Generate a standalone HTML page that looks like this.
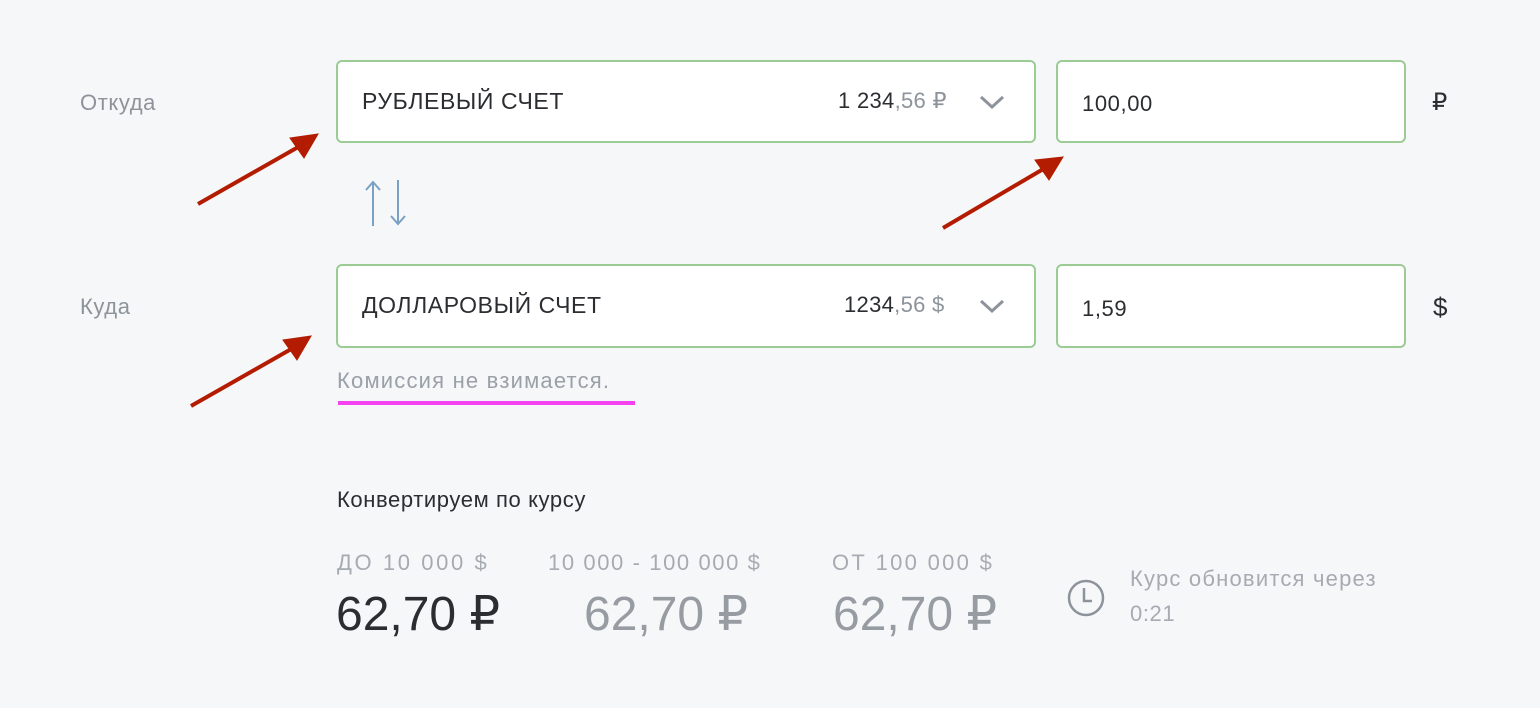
<!DOCTYPE html>
<html><head><meta charset="utf-8"><style>
body{margin:0;width:1540px;height:708px;background:#f6f7f9;font-family:"Liberation Sans",sans-serif;position:relative;overflow:hidden}
.a{position:absolute;white-space:nowrap}
.box{position:absolute;background:#fff;border:2px solid #9ccb95;border-radius:6px;box-sizing:border-box}
.lbl{color:#8d939b;font-size:22px;letter-spacing:0.6px}
.t{font-size:23px;color:#2b2d31;letter-spacing:0.6px}
.g{color:#8d939b}
</style></head><body>
<div class="a lbl" style="left:80px;top:90px">Откуда</div>
<div class="a lbl" style="left:80px;top:294px">Куда</div>

<div class="box" style="left:336px;top:60px;width:700px;height:83px"></div>
<div class="a t" style="left:362px;top:88px">РУБЛЕВЫЙ СЧЕТ</div>
<div class="a t" style="left:838px;top:88px;font-size:22px;letter-spacing:0.3px">1 234<span class="g">,56 ₽</span></div>
<svg class="a" style="left:979px;top:94px" width="26" height="16"><path d="M2 3 L13 13 L24 3" stroke="#8d939b" stroke-width="3" fill="none"/></svg>
<div class="box" style="left:1056px;top:60px;width:350px;height:83px"></div>
<div class="a t" style="left:1082px;top:91px;font-size:22px">100,00</div>
<div class="a t" style="left:1432px;top:88px;font-size:24px">₽</div>

<svg class="a" style="left:362px;top:178px" width="50" height="50"><g stroke="#7aa0c4" stroke-width="2" fill="none"><path d="M11 48 V4 M4 12 L11 4 L18 12"/><path d="M36 2 V46 M29 38 L36 46 L43 38"/></g></svg>

<div class="box" style="left:336px;top:264px;width:700px;height:84px"></div>
<div class="a t" style="left:362px;top:292px">ДОЛЛАРОВЫЙ СЧЕТ</div>
<div class="a t" style="left:844px;top:292px;font-size:22px;letter-spacing:0.3px">1234<span class="g">,56 $</span></div>
<svg class="a" style="left:979px;top:298px" width="26" height="16"><path d="M2 3 L13 13 L24 3" stroke="#8d939b" stroke-width="3" fill="none"/></svg>
<div class="box" style="left:1056px;top:264px;width:350px;height:84px"></div>
<div class="a t" style="left:1082px;top:296px;font-size:22px">1,59</div>
<div class="a t" style="left:1433px;top:292px;font-size:26px">$</div>

<div class="a lbl" style="left:337px;top:368px;font-size:22px;color:#9aa0a8;letter-spacing:1.2px">Комиссия не взимается.</div>
<div class="a" style="left:338px;top:401px;width:297px;height:4px;background:#f542f0"></div>

<svg class="a" style="left:0;top:0" width="1540" height="708"><g fill="#b31c00" stroke="#b31c00"><path d="M198 204 L300 146" stroke-width="4"/><path d="M318 134 L290 138 L304 158Z"/><path d="M191 406 L293 348" stroke-width="4"/><path d="M311 336 L283 340 L297 360Z"/><path d="M943 228 L1045 168" stroke-width="4"/><path d="M1063 157 L1035 160 L1049 180Z"/></g></svg>

<div class="a" style="left:337px;top:487px;font-size:22px;color:#2b2d31;letter-spacing:0.6px">Конвертируем по курсу</div>
<div class="a lbl" style="left:337px;top:550px;color:#a6abb2;letter-spacing:2.6px">ДО 10 000 $</div>
<div class="a lbl" style="left:548px;top:550px;color:#a6abb2;letter-spacing:1.6px">10 000 - 100 000 $</div>
<div class="a lbl" style="left:832px;top:550px;color:#a6abb2;letter-spacing:2.3px">ОТ 100 000 $</div>
<div class="a" style="left:336px;top:586px;font-size:48px;color:#2b2d31">62,70 ₽</div>
<div class="a" style="left:584px;top:586px;font-size:48px;color:#979ca3">62,70 ₽</div>
<div class="a" style="left:833px;top:586px;font-size:48px;color:#979ca3">62,70 ₽</div>
<svg class="a" style="left:1065px;top:577px" width="42" height="42"><circle cx="21" cy="21" r="17" stroke="#8d939b" stroke-width="2.5" fill="none"/><path d="M19 11 V24 H27" stroke="#8d939b" stroke-width="2.5" fill="none"/></svg>
<div class="a lbl" style="left:1130px;top:566px;color:#a6abb2;font-size:22px;letter-spacing:1.2px">Курс обновится через</div>
<div class="a lbl" style="left:1130px;top:601px;color:#a6abb2;font-size:22px">0:21</div>
</body></html>
